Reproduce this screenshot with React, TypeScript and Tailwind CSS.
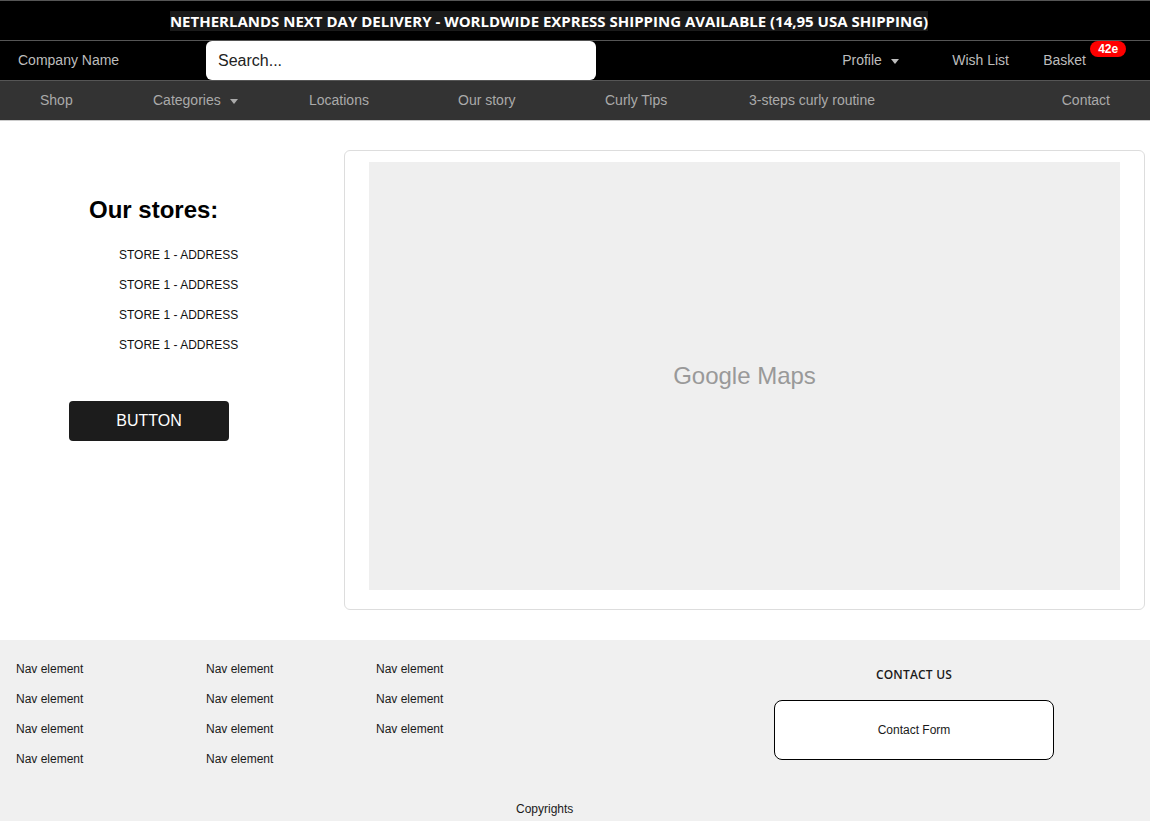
const categories = [
    { label: 'Shop', width: 'w-[113px]' },
    { label: 'Categories', width: 'w-[156px]', caret: true },
    { label: 'Locations', width: 'w-[149px]' },
    { label: 'Our story', width: 'w-[147px]' },
    { label: 'Curly Tips', width: 'w-[144px]' },
    { label: '3-steps curly routine', width: 'w-[200px]' },
]

const Caret = () => (
    <svg width="8" height="5" viewBox="0 0 8 5" className="ml-[9px] mt-[1px]">
        <path d="M0 0 L8 0 L4 5 Z" fill="currentColor" />
    </svg>
)

export default function App() {

    const stores = ['STORE 1 - ADDRESS', 'STORE 1 - ADDRESS', 'STORE 1 - ADDRESS', 'STORE 1 - ADDRESS'];

    return (
        <div className="w-[1150px] min-h-[821px] bg-white font-['Liberation_Sans',Arial,sans-serif]">

            {/* Announcement */}
            <div className="h-[41px] bg-black border-t border-[#555] border-b flex items-center justify-center pr-[52px]">
                <span className="bg-[#1a1a1a] text-white font-['Open_Sans',sans-serif] font-bold text-[15px] leading-[20px]">
                    NETHERLANDS NEXT DAY DELIVERY - WORLDWIDE EXPRESS SHIPPING AVAILABLE (14,95 USA SHIPPING)
                </span>
            </div>

            {/* Top nav */}
            <div className="h-[40px] bg-black border-b border-[#555] flex items-stretch text-[14px] text-[#bdbdbd]">
                <div className="w-[206px] pl-[18px] flex items-center">Company Name</div>
                <div className="w-[390px] bg-white rounded-md flex items-center pl-[12px] text-[16px] text-[#222]">
                    Search...
                </div>
                <div className="ml-auto flex items-center pr-[64px]">
                    <div className="flex items-center w-[110px]">
                        Profile <Caret />
                    </div>
                    <div className="w-[91px]">Wish List</div>
                    <div className="relative">
                        Basket
                        <span className="absolute left-[47px] -top-[9px] bg-[#ff0000] text-white font-bold text-[12px] leading-[16px] px-[8px] rounded-full">42e</span>
                    </div>
                </div>
            </div>

            {/* Categories */}
            <div className="h-[40px] bg-[#333] border-b border-[#ccc] flex items-center text-[14px] text-[#aaa] pl-[40px] pr-[40px]">
                {categories.map((c) => (
                    <div key={c.label} className={`${c.width} flex items-center`}>
                        {c.label}
                        {c.caret && <Caret />}
                    </div>
                ))}
                <div className="ml-auto">Contact</div>
            </div>

            {/* Main */}
            <div className="flex pt-[29px] pb-[30px]">
                <div className="w-[344px] flex flex-col">
                    <h2 className="pl-[89px] mt-[46px] text-[24px] leading-[28px] font-bold text-black">Our stores:</h2>
                    <ul className="pl-[119px] mt-[16px] text-[12px] leading-[30px] text-[#111]">
                        {stores.map((s, i) => (
                            <li key={i}>{s}</li>
                        ))}
                    </ul>
                    <button className="ml-[69px] mt-[41px] w-[160px] h-[40px] bg-[#1c1c1c] rounded-[4px] text-white text-[16px]">
                        BUTTON
                    </button>
                </div>
                <div className="w-[801px] h-[460px] border border-[#ddd] rounded-md px-[24px] pt-[11px] pb-[19px]">
                    <div className="h-full bg-[#efefef] flex items-center justify-center text-[24px] text-[#999]">
                        Google Maps
                    </div>
                </div>
            </div>

            {/* Footer */}
            <footer className="bg-[#f0f0f0] h-[181px] flex flex-col text-[12px] text-[#1a1a1a]">
                <div className="flex pt-[14px]">
                    <ul className="w-[206px] pl-[16px] leading-[30px]">
                        <li>Nav element</li>
                        <li>Nav element</li>
                        <li>Nav element</li>
                        <li>Nav element</li>
                    </ul>
                    <ul className="w-[170px] leading-[30px]">
                        <li>Nav element</li>
                        <li>Nav element</li>
                        <li>Nav element</li>
                        <li>Nav element</li>
                    </ul>
                    <ul className="w-[200px] leading-[30px]">
                        <li>Nav element</li>
                        <li>Nav element</li>
                        <li>Nav element</li>
                    </ul>
                    <div className="ml-[198px] w-[280px] flex flex-col items-center">
                        <div className="mt-[6px] font-['Open_Sans',sans-serif] font-semibold text-[12px] leading-[30px] tracking-[0.2px]">CONTACT US</div>
                        <div className="mt-[10px] w-[280px] h-[60px] bg-white border border-black rounded-lg flex items-center justify-center">
                            Contact Form
                        </div>
                    </div>
                </div>
                <div className="mt-auto pb-[4px] pl-[516px] leading-[16px]">Copyrights</div>
            </footer>
        </div>
    )
}
